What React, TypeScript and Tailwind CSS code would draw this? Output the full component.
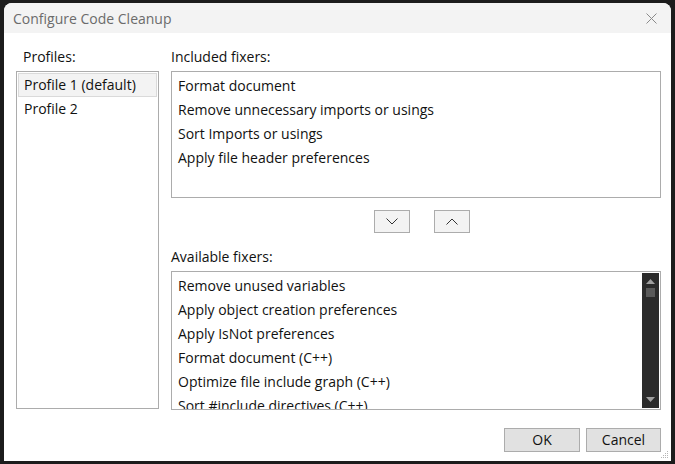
import React from 'react'

const included = [
  'Format document',
  'Remove unnecessary imports or usings',
  'Sort Imports or usings',
  'Apply file header preferences',
]

const available = [
  'Remove unused variables',
  'Apply object creation preferences',
  'Apply IsNot preferences',
  'Format document (C++)',
  'Optimize file include graph (C++)',
  'Sort #include directives (C++)',
]

const font = { fontFamily: '"Open Sans", "Noto Sans", sans-serif' }

export default function App() {
  return (
    <div className="h-[464px] w-[675px] overflow-hidden bg-[#1c1c1c] pl-[4px] pt-[3px]" style={font}>
      <div className="relative flex h-[458px] w-[667px] flex-col overflow-hidden rounded-t-[8px] bg-white">
        {/* title bar */}
        <div className="flex h-[30px] shrink-0 items-center justify-between bg-[#f3f3f3] pl-[9px] pr-[14px]">
          <span className="text-[14px] text-[#6b6b6b]">Configure Code Cleanup</span>
          <svg width="11" height="11" viewBox="0 0 11 11" className="text-[#8a8a8a]">
            <path d="M0.5 0.5 L10.5 10.5 M10.5 0.5 L0.5 10.5" stroke="currentColor" strokeWidth="1" />
          </svg>
        </div>

        {/* body */}
        <div className="flex flex-1 flex-col pl-[12px] pr-[10px] pt-[14px] text-[14px] text-[#111]">
          <div className="flex gap-[12px]">
            {/* profiles */}
            <div className="flex w-[143px] flex-col">
              <div className="mb-[4px] h-[20px] pl-[7px] leading-[20px]">Profiles:</div>
              <div className="h-[338px] border border-[#acacac] p-[1px]">
                <div className="h-[24px] border border-[#dadada] bg-[#f3f3f3] pl-[5px] leading-[22px]">Profile 1 (default)</div>
                <div className="h-[24px] pl-[6px] leading-[24px]">Profile 2</div>
              </div>
            </div>

            {/* fixers */}
            <div className="flex w-[490px] flex-col">
              <div className="mb-[4px] h-[20px] leading-[20px]">Included fixers:</div>
              <div className="h-[127px] border border-[#acacac] px-[6px] pt-[2px]">
                {included.map((t) => (
                  <div key={t} className="h-[24px] leading-[24px]">{t}</div>
                ))}
              </div>

              <div className="mt-[12px] flex justify-center gap-[24px] pl-[12px]">
                <button className="flex h-[23px] w-[36px] items-center justify-center border border-[#acacac] bg-[#f3f3f3]">
                  <svg width="12" height="7" viewBox="0 0 12 7">
                    <path d="M0.5 0.5 L6 6 L11.5 0.5" fill="none" stroke="#333" strokeWidth="1" />
                  </svg>
                </button>
                <button className="flex h-[23px] w-[36px] items-center justify-center border border-[#acacac] bg-[#f3f3f3]">
                  <svg width="12" height="7" viewBox="0 0 12 7">
                    <path d="M0.5 6.5 L6 1 L11.5 6.5" fill="none" stroke="#333" strokeWidth="1" />
                  </svg>
                </button>
              </div>

              <div className="mt-[14px] mb-[4px] h-[20px] leading-[20px]">Available fixers:</div>
              <div className="relative h-[139px] overflow-hidden border border-[#acacac] pl-[6px] pt-[2px]">
                {available.map((t) => (
                  <div key={t} className="h-[24px] leading-[24px]">{t}</div>
                ))}
                {/* scrollbar */}
                <div className="absolute bottom-[1px] right-[1px] top-[1px] flex w-[17px] flex-col items-center bg-[#2b2b2b] pt-[6px] pb-[6px]">
                  <svg width="9" height="5" viewBox="0 0 9 5">
                    <path d="M4.5 0 L9 5 L0 5 Z" fill="#a0a0a0" />
                  </svg>
                  <div className="mt-[4px] h-[9px] w-[9px] bg-[#5a5a5a]" />
                  <div className="flex-1" />
                  <svg width="9" height="5" viewBox="0 0 9 5">
                    <path d="M0 0 L9 0 L4.5 5 Z" fill="#a0a0a0" />
                  </svg>
                </div>
              </div>
            </div>
          </div>

          {/* footer */}
          <div className="mt-[18px] flex justify-end gap-[6px]">
            <button className="h-[24px] w-[76px] border border-[#acacac] bg-[#e1e1e1] text-[14px] leading-[22px] text-[#111]">OK</button>
            <button className="h-[24px] w-[75px] border border-[#acacac] bg-[#e1e1e1] text-[14px] leading-[22px] text-[#111]">Cancel</button>
          </div>
        </div>

        {/* resize grip */}
        <svg width="8" height="8" viewBox="0 0 8 8" className="absolute bottom-[2px] right-[2px]">
          <rect x="6" y="0" width="1" height="1" fill="#b5b5b5" />
          <rect x="4" y="2" width="1" height="1" fill="#b5b5b5" />
          <rect x="6" y="2" width="1" height="1" fill="#b5b5b5" />
          <rect x="2" y="4" width="1" height="1" fill="#b5b5b5" />
          <rect x="4" y="4" width="1" height="1" fill="#b5b5b5" />
          <rect x="6" y="4" width="1" height="1" fill="#b5b5b5" />
          <rect x="0" y="6" width="1" height="1" fill="#b5b5b5" />
          <rect x="2" y="6" width="1" height="1" fill="#b5b5b5" />
          <rect x="4" y="6" width="1" height="1" fill="#b5b5b5" />
          <rect x="6" y="6" width="1" height="1" fill="#b5b5b5" />
        </svg>
      </div>
    </div>
  )
}
